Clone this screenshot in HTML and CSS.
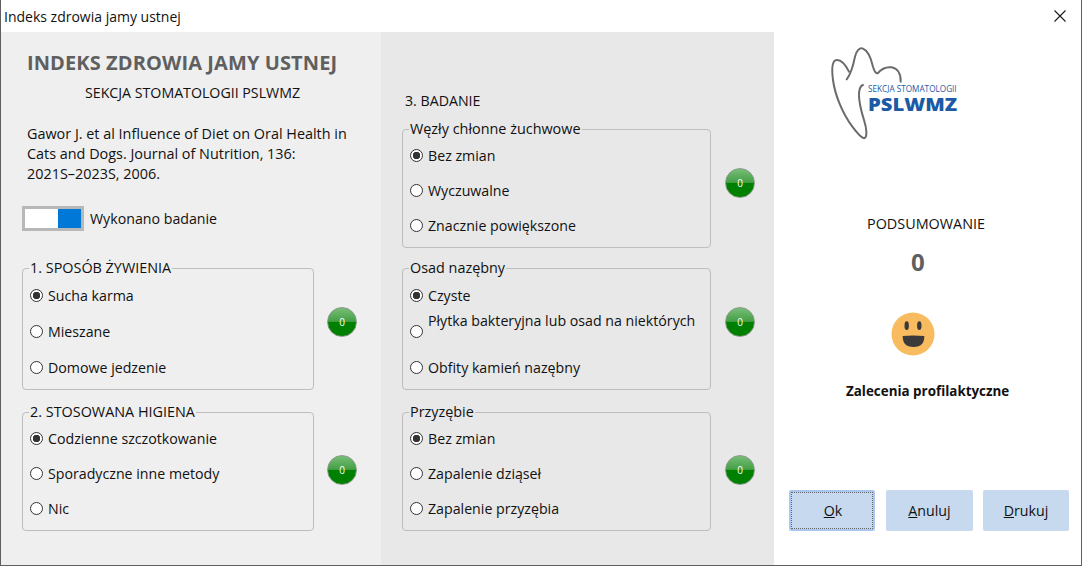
FILE: index.html
```html
<!DOCTYPE html>
<html lang="en">
<head>
    <meta charset="UTF-8">
    <meta name="viewport" content="width=device-width, initial-scale=1.0">
    <title>Indeks zdrowia jamy ustnej</title>
    <link rel="stylesheet" href="styles.css">
</head>
<body>
    <div class="window">
        <div class="titlebar">
            <span class="title-text">Indeks zdrowia jamy ustnej</span>
            <svg class="close-icon" width="12" height="12" viewBox="0 0 12 12">
                <path d="M.5.5l11 11M11.5.5l-11 11" stroke="#1a1a1a" stroke-width="1.1" fill="none"/>
            </svg>
        </div>
        <div class="content">
            <!-- Left panel -->
            <div class="panel panel-left">
                <h1 class="main-title">INDEKS ZDROWIA JAMY USTNEJ</h1>
                <p class="subtitle">SEKCJA STOMATOLOGII PSLWMZ</p>
                <p class="citation">Gawor J. et al Influence of Diet on Oral Health in<br>Cats and Dogs. Journal of Nutrition, 136:<br>2021S–2023S, 2006.</p>
                <div class="toggle-row">
                    <span class="toggle"><span class="toggle-knob"></span></span>
                    <span>Wykonano badanie</span>
                </div>
                <div class="group-row row-first">
                    <fieldset class="group group-tall">
                        <legend>1. SPOSÓB ŻYWIENIA</legend>
                        <label class="opt"><input type="radio" name="a" checked>Sucha karma</label>
                        <label class="opt"><input type="radio" name="a">Mieszane</label>
                        <label class="opt"><input type="radio" name="a">Domowe jedzenie</label>
                    </fieldset>
                    <span class="ball ball-up">0</span>
                </div>
                <div class="group-row row-next">
                    <fieldset class="group">
                        <legend>2. STOSOWANA HIGIENA</legend>
                        <label class="opt"><input type="radio" name="b" checked>Codzienne szczotkowanie</label>
                        <label class="opt"><input type="radio" name="b">Sporadyczne inne metody</label>
                        <label class="opt"><input type="radio" name="b">Nic</label>
                    </fieldset>
                    <span class="ball ball-down">0</span>
                </div>
            </div>

            <!-- Middle panel -->
            <div class="panel panel-mid">
                <p class="section-label">3. BADANIE</p>
                <div class="group-row row-exam">
                    <fieldset class="group">
                        <legend>Węzły chłonne żuchwowe</legend>
                        <label class="opt"><input type="radio" name="c" checked>Bez zmian</label>
                        <label class="opt"><input type="radio" name="c">Wyczuwalne</label>
                        <label class="opt"><input type="radio" name="c">Znacznie powiększone</label>
                    </fieldset>
                    <span class="ball">0</span>
                </div>
                <div class="group-row row-tartar">
                    <fieldset class="group group-tall">
                        <legend>Osad nazębny</legend>
                        <label class="opt"><input type="radio" name="d" checked>Czyste</label>
                        <label class="opt opt-raised"><input type="radio" name="d"><span>Płytka bakteryjna lub osad na niektórych</span></label>
                        <label class="opt"><input type="radio" name="d">Obfity kamień nazębny</label>
                    </fieldset>
                    <span class="ball ball-up">0</span>
                </div>
                <div class="group-row row-next">
                    <fieldset class="group">
                        <legend>Przyzębie</legend>
                        <label class="opt"><input type="radio" name="e" checked>Bez zmian</label>
                        <label class="opt"><input type="radio" name="e">Zapalenie dziąseł</label>
                        <label class="opt"><input type="radio" name="e">Zapalenie przyzębia</label>
                    </fieldset>
                    <span class="ball ball-down">0</span>
                </div>
            </div>

            <!-- Right panel -->
            <div class="panel panel-right">
                <svg class="logo" width="180" height="120" viewBox="0 0 540 360">
                    <path d="M150 125C140 105 128 88 112 90C98 93 98 120 102 150C108 195 130 250 160 290C172 306 186 324 195 325C206 322 203 295 195 270C184 235 176 200 182 178C184 170 188 166 192 165" fill="none" stroke="#6b6b6b" stroke-width="6" stroke-linecap="round"/>
                    <path d="M143 148C158 130 163 105 168 80C172 62 182 52 192 56C208 62 216 85 222 110C226 124 230 130 236 130C246 118 262 110 278 112C296 115 306 132 305 155" fill="none" stroke="#6b6b6b" stroke-width="6" stroke-linecap="round"/>
                    <text class="logo-small" x="207" y="187" textLength="266" lengthAdjust="spacingAndGlyphs">SEKCJA STOMATOLOGII</text>
                    <text class="logo-big" x="207" y="243" textLength="267" lengthAdjust="spacingAndGlyphs">PSLWMZ</text>
                </svg>
                <p class="summary-label">PODSUMOWANIE</p>
                <p class="summary-value">0</p>
                <svg class="smiley" width="44" height="44" viewBox="0 0 44 44">
                    <circle cx="22" cy="22" r="21.5" fill="#f9bb5f"/>
                    <ellipse cx="15.700" cy="13.700" rx="2.200" ry="4.400" fill="#3a3a3a"/>
                    <ellipse cx="28.300" cy="13.700" rx="2.200" ry="4.400" fill="#3a3a3a"/>
                    <path d="M11.700 24Q22 23 33.300 24Q33.500 35 22.500 35Q11.500 35 11.700 24Z" fill="#3a3a3a"/>
                </svg>
                <p class="advice">Zalecenia profilaktyczne</p>
                <div class="buttons">
                    <button class="btn btn-ok"><u>O</u>k</button>
                    <button class="btn btn-cancel"><u>A</u>nuluj</button>
                    <button class="btn btn-print"><u>D</u>rukuj</button>
                </div>
            </div>
        </div>
    </div>
</body>
</html>
```

FILE: styles.css
```css
* {
    box-sizing: border-box;
}
html, body {
    margin: 0;
    padding: 0;
}
body {
    font-family: 'Open Sans', 'Noto Sans', sans-serif;
    font-size: 14.2px;
    color: #111;
    background: #fff;
}
p, h1 {
    margin: 0;
}
.window {
    width: 1082px;
    height: 566px;
    display: flex;
    flex-direction: column;
    border: 1px solid #5f5f5f;
    border-top: 0;
    overflow: hidden;
}
.titlebar {
    height: 32px;
    flex: none;
    display: flex;
    align-items: center;
    justify-content: space-between;
    padding: 0 15px 0 3px;
    background: #fff;
    font-size: 14px;
}
.content {
    flex: 1;
    display: flex;
}
.panel {
    height: 100%;
}
.panel-left {
    width: 380px;
    background: #efefef;
    padding: 19px 0 0 21px;
}
.panel-mid {
    width: 393px;
    background: #e8e8e8;
    padding: 59px 0 0 21px;
}
.panel-right {
    flex: 1;
    background: #fff;
    position: relative;
    display: flex;
    flex-direction: column;
}
.main-title {
    font-size: 20px;
    font-weight: 700;
    line-height: 24px;
    letter-spacing: .1px;
    color: #5f5f5f;
    margin-left: 5px;
}
.subtitle {
    line-height: 20px;
    margin: 8px 0 0 63px;
}
.citation {
    font-size: 14.4px;
    line-height: 20px;
    margin: 21px 0 0 5px;
}
.toggle-row {
    display: flex;
    align-items: center;
    gap: 6px;
    margin-top: 22px;
    height: 24px;
}
.toggle {
    width: 62px;
    height: 25px;
    border: 3px solid #b8b8b8;
    background: #fff;
    display: flex;
    justify-content: flex-end;
}
.toggle-knob {
    width: 23px;
    height: 19px;
    background: #0078d7;
}
.section-label {
    margin-left: 3px;
    line-height: 20px;
}
.group-row {
    display: flex;
    align-items: flex-start;
}
.row-first {
    margin-top: 28px;
}
.row-next {
    margin-top: 12px;
}
.row-exam {
    margin-top: 8px;
}
.row-tartar {
    margin-top: 10px;
}
.group {
    width: 292px;
    height: 129px;
    margin: 0;
    padding: 0 0 0 7px;
    border: 1px solid #bdbdbd;
    border-radius: 4px;
    display: flex;
    flex-direction: column;
}
.panel-mid .group {
    width: 309px;
}
.group-tall {
    height: 132px;
}
.group legend {
    margin-left: -1px;
    margin-bottom: -1px;
    padding: 0 1px;
    font-size: 14.4px;
    line-height: 20px;
    height: 20px;
}
.opt {
    height: 35px;
    flex: none;
    display: flex;
    align-items: center;
    gap: 5px;
}
.group-tall .opt {
    height: 36px;
}
.opt input {
    appearance: none;
    width: 13px;
    height: 13px;
    margin: 0;
    flex: none;
    border: 1px solid #333;
    border-radius: 50%;
    background: #fff;
}
.opt input:checked {
    background: radial-gradient(circle, #333 0 3.500px, #fff 4px);
}
.opt-raised span {
    margin-top: -22px;
}
.ball {
    width: 30px;
    height: 30px;
    margin: 49px 0 0 13px;
    flex: none;
    border-radius: 50%;
    border: 1px solid #8a9a8a;
    background: linear-gradient(#78bd78 0, #449f44 48%, #008000 50%, #008000 100%);
    color: #fff;
    font-size: 10px;
    line-height: 28px;
    text-align: center;
}
.panel-mid .ball {
    margin-left: 14px;
}
.ball.ball-up {
    margin-top: 49px;
}
.ball.ball-down {
    margin-top: 53px;
}
.logo {
    position: absolute;
    left: 25px;
    top: -2px;
}
.logo-small {
    font-size: 26px;
    fill: #1c5aa6;
}
.logo-big {
    font-size: 54px;
    font-weight: 800;
    fill: #1c5aa6;
}
.summary-label {
    font-size: 14.4px;
    line-height: 20px;
    margin-top: 182px;
    padding-left: 93px;
}
.summary-value {
    font-size: 24px;
    font-weight: 700;
    line-height: 30px;
    color: #5f5f5f;
    margin-top: 13px;
    padding-left: 137px;
}
.smiley {
    margin: 35px 0 0 117px;
    flex: none;
}
.advice {
    font-size: 13.4px;
    font-weight: 700;
    line-height: 20px;
    margin-top: 25px;
    padding-left: 72px;
}
.buttons {
    display: flex;
    gap: 11px;
    margin: 89px 0 0 15px;
}
.btn {
    height: 41px;
    width: 87px;
    border: 0;
    border-radius: 2px;
    background: #c7d9ee;
    font-family: inherit;
    font-size: 14.2px;
    color: #111;
    padding: 0;
}
.btn-ok {
    width: 86px;
    border: 2px solid #a9c6ee;
    outline: 1px dotted #666;
    outline-offset: -3px;
    padding-left: 2px;
}
.btn-print {
    width: 86px;
    margin-left: -1px;
}
```
